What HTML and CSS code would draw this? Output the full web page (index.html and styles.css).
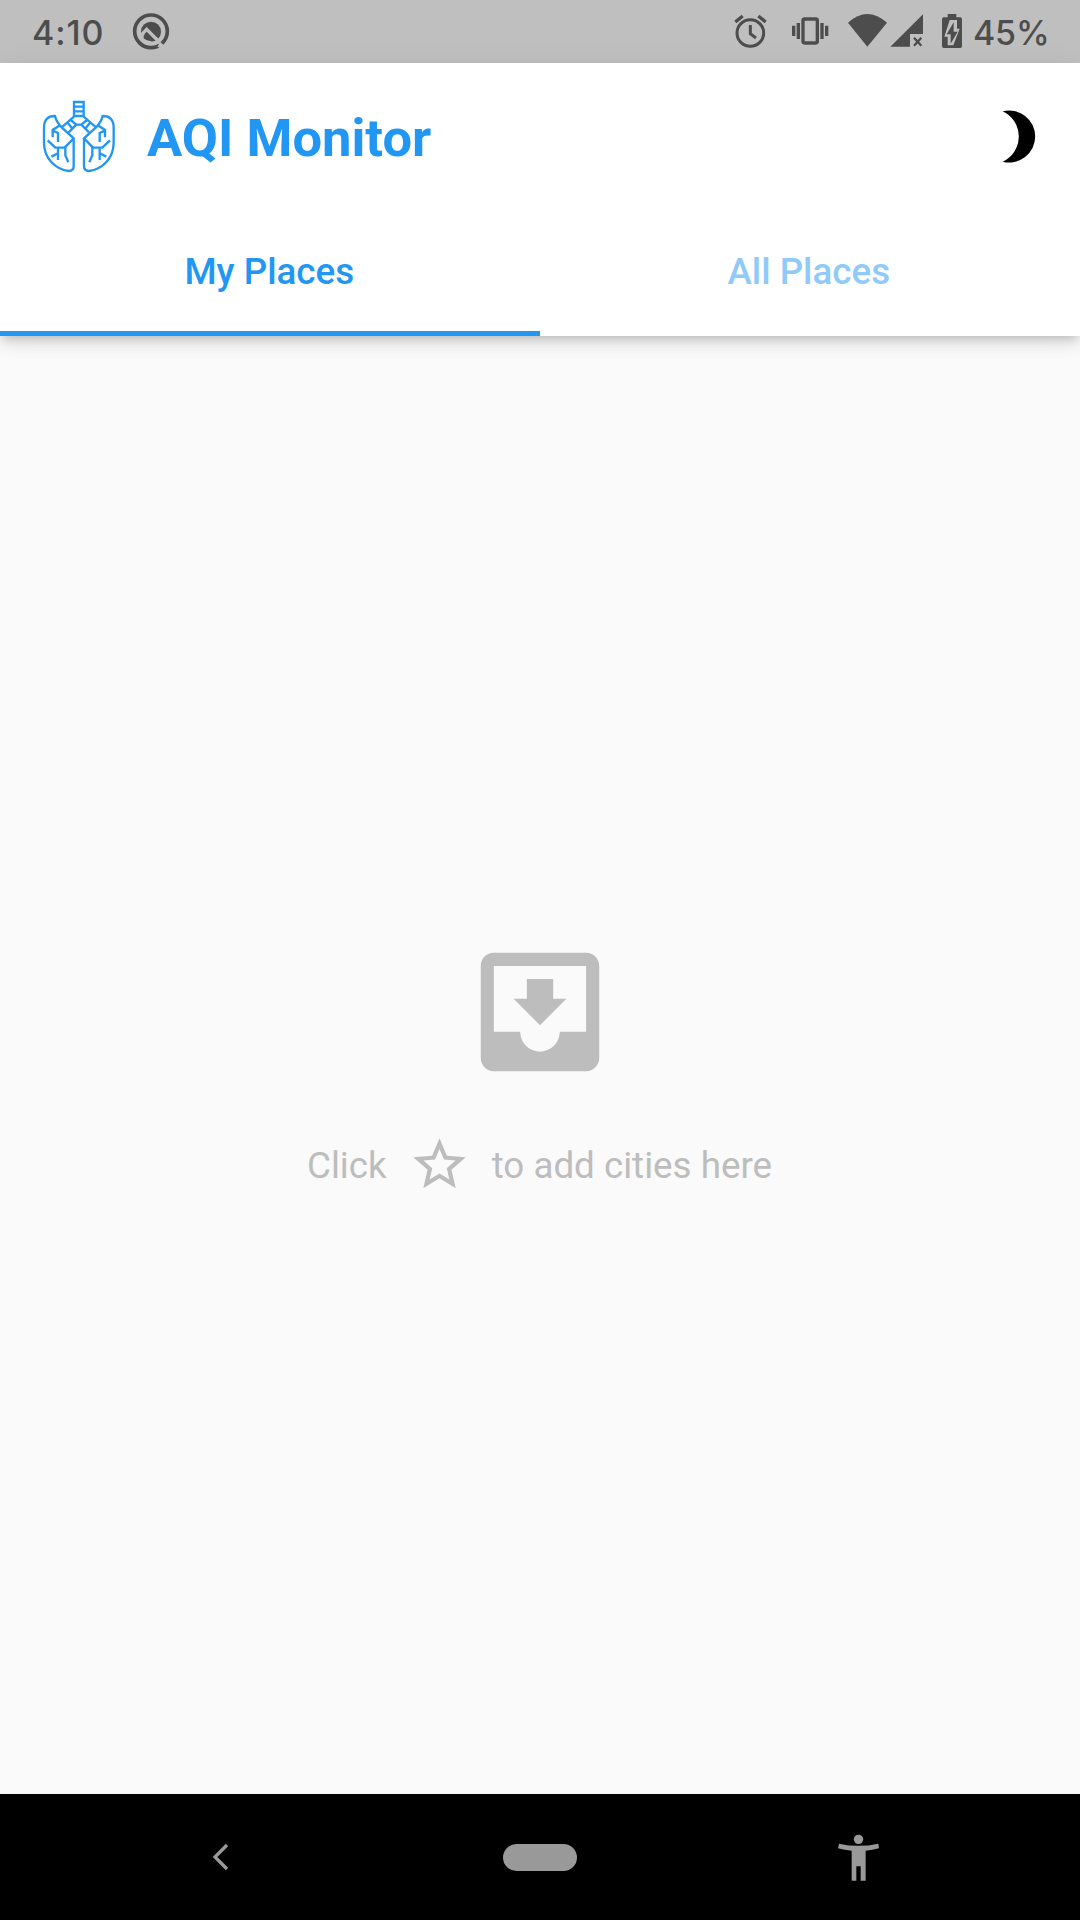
FILE: index.html
```html
<!DOCTYPE html>
<html lang="en">
<head>
<meta charset="utf-8">
<title>AQI Monitor</title>
<link rel="stylesheet" href="styles.css">
</head>
<body>
<div class="screen">
  <div class="status-bar">
    <span class="clock">4:10</span>
    <svg class="status-app" viewBox="396 36 114 117">
      <circle cx="453" cy="94" r="49" fill="none" stroke="currentColor" stroke-width="11"/>
      <circle cx="453" cy="95" r="30" fill="currentColor"/>
      <path d="M422 107L440 88L478 126" fill="none" stroke="#bfbfbf" stroke-width="10"/>
      <path d="M423 104L429 99L455 125L450 130H430Z" fill="#bfbfbf"/>
      <path d="M431 107L440 98L462 120Q446 128 431 115Z" fill="currentColor"/>
      <path d="M472 139L482 129L499 143L490 152Z" fill="#bfbfbf"/>
      <path d="M474 131L480 125L491 135L484 142Z" fill="#bfbfbf"/>
    </svg>
    <div class="status-icons">
      <svg class="alarm" viewBox="72 42 99 105" fill="none" stroke="currentColor">
        <circle cx="121" cy="99" r="40" stroke-width="9"/>
        <path d="M121 75V101L138 114" stroke-width="9"/>
        <path d="M76 66L98 48M145 48L167 66" stroke-width="10"/>
      </svg>
      <svg class="vibrate" viewBox="243 42 114 105" fill="none" stroke="currentColor" stroke-width="10">
        <rect x="279" y="57" width="43" height="72" rx="5"/>
        <path d="M251 77V108M265 69V117M336 69V117M350 77V108"/>
      </svg>
      <svg class="wifi" viewBox="411 42 123 105"><path d="M414 68Q472 16 531 68L472 140Z" fill="currentColor"/></svg>
      <svg class="signal" viewBox="540 42 102 105">
        <path d="M639 43V102H600V140H541Z" fill="currentColor"/>
        <path d="M612 113L634 137M634 113L612 137" stroke="currentColor" stroke-width="7"/>
      </svg>
      <svg class="battery" viewBox="693 42 66 105">
        <path d="M713 42H739V52H751Q756 52 756 57V138Q756 144 751 144H701Q696 144 696 138V57Q696 52 701 52H713Z" fill="currentColor"/>
        <path d="M719 60H741V86H749L730 136H713V110H703Z" fill="#bfbfbf"/>
        <path d="M731 67L710 103H722V131L743 95H731Z" fill="currentColor"/>
      </svg>
    </div>
    <span class="charge">45%</span>
  </div>

  <header class="app-bar">
    <div class="title-row">
      <svg class="logo" viewBox="33 27 228 225" fill="none" stroke="currentColor" stroke-width="7">
        <path d="M132 82V36H161V82M132 50H161M132 64H161M132 78H161"/>
        <path d="M132 80L95 112M161 80L198 112M122 90L139 104H154L171 90M139 104L116 127M154 104L177 127M112 97L125 113M181 97L168 113"/>
        <path d="M131 145V228Q131 243 116 243C76 239 42 204 42 158V112C42 88 56 77 75 78C78 93 85 102 95 112L131 145L104 173"/>
        <path d="M53 151L76 173H106V196L115 217M84 173V190L64 200M84 188V210M90 106L68 120V142M68 122L84 129V156"/>
        <path d="M162 145V228Q162 243 177 243C217 239 251 204 251 158V112C251 88 237 77 218 78C215 93 208 102 198 112L162 145L189 173"/>
        <path d="M240 151L217 173H187V196L178 217M209 173V190L229 200M209 188V210M203 106L225 120V142M225 122L209 129V156"/>
      </svg>
      <h1 class="title">AQI Monitor</h1>
      <svg class="moon" viewBox="120 54 111 168"><path d="M125 64A78 78 0 1 1 125 215A83 83 0 0 0 125 64Z"/></svg>
    </div>
    <nav class="tabs">
      <div class="tab active">My Places</div>
      <div class="tab">All Places</div>
    </nav>
  </header>

  <main class="content">
    <svg class="inbox" viewBox="0 0 24 24"><path fill="currentColor" d="M16 10h-2V7h-4v3H8l4 4 4-4zm3-7H4.990C3.880 3 3 3.900 3 5v14c0 1.100.88 2 1.990 2H19c1.100 0 2-.9 2-2V5c0-1.100-.9-2-2-2zm0 12h-4c0 1.660-1.350 3-3 3s-3-1.340-3-3H4.990V5H19v10z"/></svg>
    <div class="hint">
      <span>Click</span>
      <svg class="star" viewBox="0 0 24 24"><path fill="currentColor" d="M22 9.240l-7.190-.62L12 2 9.190 8.630 2 9.240l5.460 4.730L5.820 21 12 17.270 18.180 21l-1.630-7.030L22 9.240zM12 15.400l-3.760 2.270 1-4.280-3.320-2.880 4.380-.38L12 6.100l1.710 4.040 4.380.38-3.320 2.880 1 4.280L12 15.400z"/></svg>
      <span>to add cities here</span>
    </div>
  </main>

  <footer class="nav-bar">
    <svg class="back" viewBox="66 189 51 84"><path d="M111 195L75 231L111 267" fill="none" stroke="currentColor" stroke-width="10"/></svg>
    <div class="home"></div>
    <svg class="person" viewBox="51 39 129 147" fill="currentColor">
      <circle cx="115.500" cy="58" r="14"/>
      <path d="M57 71Q115 84 175 71L177 85Q157 90 137 92V182H122V139H109V182H95V92Q74 90 54 85Z"/>
    </svg>
  </footer>
</div>
</body>
</html>
```
FILE: styles.css
```css
* { box-sizing: border-box; }
body { margin: 0; font-family: Roboto, sans-serif; }
svg { display: block; flex: none; }
.screen {
  width: 1080px;
  height: 1920px;
  display: flex;
  flex-direction: column;
  background: #fafafa;
  overflow: hidden;
}

.status-bar {
  height: 63px;
  flex: none;
  display: flex;
  align-items: flex-start;
  padding: 0 32px;
  background: #bfbfbf;
  color: #4d4d4d;
  font: 500 34px/63px Inter, sans-serif;
}
.clock { width: 100px; padding-top: 1px; letter-spacing: .9px; }
.status-app { width: 38px; height: 39px; margin-top: 12px; }
.status-icons { display: flex; margin: 14px 0 0 auto; }
.alarm { width: 33px; height: 35px; margin-right: 24px; }
.vibrate { width: 38px; height: 35px; margin-right: 18px; }
.wifi { width: 41px; height: 35px; margin-right: 2px; }
.signal { width: 34px; height: 35px; margin-right: 17px; }
.battery { width: 22px; height: 35px; }
.charge { width: 75px; margin-left: 10px; padding-top: 1px; letter-spacing: -.2px; }

.app-bar {
  height: 273px;
  flex: none;
  display: flex;
  flex-direction: column;
  background: #fff;
  color: #2196f3;
  position: relative;
  box-shadow: 0 5px 10px -3px rgba(0, 0, 0, .2), 0 11px 13px rgba(0, 0, 0, .05), 0 3px 26px rgba(0, 0, 0, .06);
}
.title-row {
  height: 147px;
  display: flex;
  align-items: center;
  padding: 0 42px 0 41px;
}
.logo { width: 76px; height: 75px; }
.title { margin: 3px 0 0 30px; font-size: 52.5px; font-weight: 700; line-height: 62px; }
.moon { width: 37px; height: 56px; margin: 0 0 2px auto; color: #000; }
.tabs { flex: 1; display: flex; }
.tab {
  flex: 1;
  padding: 40px 2px 0 0;
  text-align: center;
  font-size: 36.75px;
  line-height: 43px;
  font-weight: 500;
  color: #90caf9;
}
.active { padding-right: 1px; color: #2196f3; border-bottom: 5px solid #2196f3; }

.content {
  flex: 1;
  display: flex;
  flex-direction: column;
  align-items: center;
  justify-content: center;
  gap: 42px;
  padding-bottom: 1px;
  color: #bdbdbd;
}
.inbox { width: 158px; height: 158px; }
.hint { display: flex; align-items: center; gap: 21px; font-size: 36.75px; line-height: 43px; }
.hint span { padding-top: 2px; }
.hint span:first-child { margin-left: -1px; }
.star { width: 63px; height: 63px; }

.nav-bar {
  height: 126px;
  flex: none;
  display: flex;
  align-items: flex-start;
  background: #000;
  color: #999;
}
.back { width: 17px; height: 28px; margin: 49px 0 0 212px; }
.home { width: 74px; height: 27px; margin: 49.5px 0 0 274px; border-radius: 14px; background: #999; }
.person { width: 43px; height: 49px; margin: 39px 0 0 260px; }
```
